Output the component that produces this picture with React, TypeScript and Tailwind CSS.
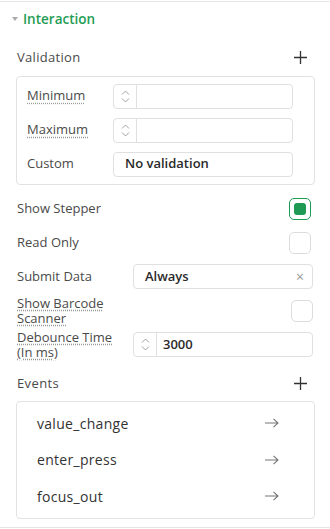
import React from 'react'

const font = { fontFamily: '"Open Sans", "Noto Sans", sans-serif' }

function Stepper() {
  return (
    <div className="flex h-full w-[23px] shrink-0 flex-col items-center justify-center border-r border-[#e0e0e0] text-[#a0a0a0]">
      <svg width="9" height="5" viewBox="0 0 9 5" fill="none" stroke="currentColor" strokeWidth="1">
        <path d="M1 4.5 L4.5 1 L8 4.5" />
      </svg>
      <svg width="9" height="5" viewBox="0 0 9 5" fill="none" stroke="currentColor" strokeWidth="1" className="mt-[3px]">
        <path d="M1 0.5 L4.5 4 L8 0.5" />
      </svg>
    </div>
  )
}

function Plus() {
  return (
    <svg width="13" height="13" viewBox="0 0 13 13" stroke="#333" strokeWidth="1.3">
      <path d="M6.5 0 V13 M0 6.5 H13" />
    </svg>
  )
}

function Arrow() {
  return (
    <svg width="14" height="10" viewBox="0 0 14 10" fill="none" stroke="#777" strokeWidth="1.1">
      <path d="M0 5 H13 M8.5 0.8 L13 5 L8.5 9.2" />
    </svg>
  )
}

function Checkbox({ checked }: { checked?: boolean }) {
  return (
    <div
      className={
        checked
          ? 'flex h-[22px] w-[22px] items-center justify-center rounded-[5px] border border-[#1f9d55]'
          : 'h-[22px] w-[22px] rounded-[5px] border border-[#dcdcdc]'
      }
    >
      {checked && <div className="h-[12px] w-[12px] rounded-[3px] bg-[#1f9a55]" />}
    </div>
  )
}

export default function App() {
  const events = ['value_change', 'enter_press', 'focus_out']

  return (
    <div className="h-[529px] w-[330px] overflow-hidden bg-white text-[13px] text-[#4a4a4a]" style={font}>
      <div className="mt-[1px] border-t border-[#e6e6e6]">
        {/* Header */}
        <div className="flex h-[34px] items-center pl-[12px]">
          <svg width="6" height="4" viewBox="0 0 6 4" className="mr-[5px]">
            <path d="M0 0 H6 L3 4 Z" fill="#aaa" />
          </svg>
          <span className="text-[13.5px] font-semibold text-[#1f9d55]">Interaction</span>
        </div>

        {/* Validation */}
        <div className="mt-[12px] flex items-center justify-between pl-[17px] pr-[23px]">
          <span className="tracking-[0.3px]">Validation</span>
          <Plus />
        </div>

        <div className="ml-[16px] mt-[8px] w-[299px] rounded-[4px] border border-[#e2e2e2] px-[10px] py-[7px]">
          <div className="flex flex-col gap-[9px]">
            <div className="flex h-[25px] items-center">
              <span className="w-[86px] underline decoration-dotted decoration-[#999] underline-offset-[3px]">Minimum</span>
              <div className="flex h-[25px] w-[180px] items-center rounded-[4px] border border-[#e0e0e0]">
                <Stepper />
              </div>
            </div>
            <div className="flex h-[25px] items-center">
              <span className="w-[86px] underline decoration-dotted decoration-[#999] underline-offset-[3px]">Maximum</span>
              <div className="flex h-[25px] w-[180px] items-center rounded-[4px] border border-[#e0e0e0]">
                <Stepper />
              </div>
            </div>
            <div className="flex h-[25px] items-center">
              <span className="w-[86px]">Custom</span>
              <div className="flex h-[25px] w-[180px] items-center rounded-[4px] border border-[#e0e0e0] pl-[11px] font-semibold text-[#2a2a2a]">
                No validation
              </div>
            </div>
          </div>
        </div>

        {/* Props */}
        <div className="mt-[7px] flex flex-col pl-[17px] pr-[17px]">
          <div className="flex h-[34px] items-center justify-between pr-[2px]">
            <span>Show Stepper</span>
            <Checkbox checked />
          </div>
          <div className="flex h-[34px] items-center justify-between pr-[2px]">
            <span>Read Only</span>
            <Checkbox />
          </div>
          <div className="flex h-[34px] items-center justify-between">
            <span>Submit Data</span>
            <div className="flex h-[25px] w-[180px] items-center justify-between rounded-[4px] border border-[#e0e0e0] pl-[11px] pr-[8px]">
              <span className="font-semibold text-[#2a2a2a]">Always</span>
              <span className="text-[14px] text-[#999]">×</span>
            </div>
          </div>
          <div className="flex h-[34px] items-center justify-between">
            <div className="flex flex-col">
              <span className="block h-[15px] leading-[15px] underline decoration-dotted decoration-[#999] underline-offset-[2px]">Show Barcode</span>
              <span className="block h-[15px] leading-[15px] underline decoration-dotted decoration-[#999] underline-offset-[2px]">Scanner</span>
            </div>
            <Checkbox />
          </div>
          <div className="flex h-[34px] items-center justify-between">
            <div className="flex flex-col">
              <span className="block h-[15px] leading-[15px] underline decoration-dotted decoration-[#999] underline-offset-[2px]">Debounce Time</span>
              <span className="block h-[15px] leading-[15px] underline decoration-dotted decoration-[#999] underline-offset-[2px]">(In ms)</span>
            </div>
            <div className="flex h-[25px] w-[180px] items-center rounded-[4px] border border-[#e0e0e0]">
              <Stepper />
              <span className="pl-[6px] font-semibold text-[#2a2a2a]">3000</span>
            </div>
          </div>
        </div>

        {/* Events */}
        <div className="mt-[12px] flex items-center justify-between pl-[17px] pr-[23px]">
          <span className="tracking-[0.4px]">Events</span>
          <Plus />
        </div>

        <div className="ml-[16px] mt-[8px] w-[299px] rounded-[4px] border border-[#e2e2e2] py-[3px]">
          {events.map((e) => (
            <div key={e} className="flex h-[36.5px] items-center justify-between pl-[20px] pr-[35px]">
              <span className="text-[14px] tracking-[0.3px] text-[#333]">{e}</span>
              <Arrow />
            </div>
          ))}
        </div>

        <div className="mt-[8px] border-t border-[#e6e6e6]" />
      </div>
    </div>
  )
}
